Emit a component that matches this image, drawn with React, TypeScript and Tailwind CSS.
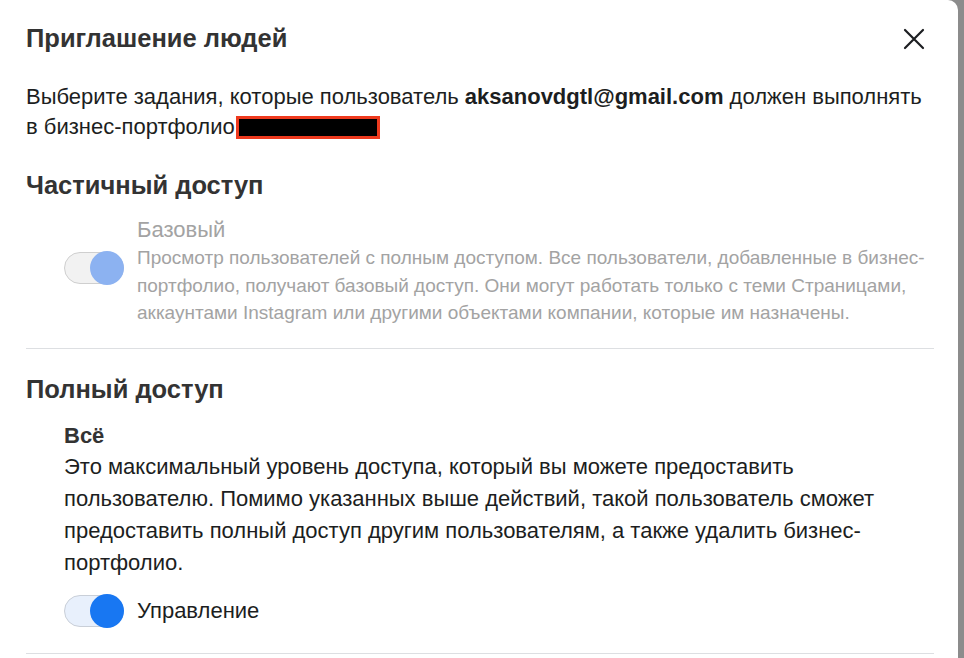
import React from "react";

function Toggle({ disabled }: { disabled?: boolean }) {
  return (
    <div
      className={
        "relative w-[60px] h-[32px] rounded-full border shrink-0 " +
        (disabled ? "bg-[#f2f2f2] border-[#cfcfcf]" : "bg-[#e8f0fc] border-[#c9cfd8]")
      }
    >
      <div
        className={
          "absolute top-[-2px] right-[-1px] w-[34px] h-[34px] rounded-full " +
          (disabled ? "bg-[#8cb2f1]" : "bg-[#1877f2]")
        }
      />
    </div>
  );
}

export default function App() {
  return (
    <div
      className="w-[964px] h-[658px] bg-[#8c8c8c] flex overflow-hidden"
      style={{ fontFamily: '"Liberation Sans", Arial, sans-serif' }}
    >
      <div className="w-[958px] h-full bg-white rounded-tr-[10px] pl-[26px] pr-[24px] pt-[23px] text-[#1c1e21]">
        <div className="flex items-center justify-between">
          <h1 className="text-[25.5px] leading-[30px] font-bold text-[#333333]">Приглашение людей</h1>
          <svg width="22" height="22" viewBox="0 0 22 22" className="mr-[9px] mt-[2px]">
            <path d="M2 2L20 20M20 2L2 20" stroke="#1c1e21" strokeWidth="2.2" strokeLinecap="round" />
          </svg>
        </div>

        <p className="mt-[29px] text-[22px] leading-[30px]">
          Выберите задания, которые пользователь <b>aksanovdgtl@gmail.com</b> должен выполнять
          <br />в бизнес-портфолио
          <span className="inline-block align-middle w-[144px] h-[23px] bg-black border-[3px] border-[#ee3a1e] ml-[1px] -mt-[2px]" />
        </p>

        <h2 className="mt-[28px] text-[25.5px] leading-[30px] font-bold text-[#333333]">Частичный доступ</h2>

        <div className="mt-[16px] flex">
          <div className="w-[111px] shrink-0 pl-[38px] pt-[36px]">
            <Toggle disabled />
          </div>
          <div className="text-[#a3a3a3]">
            <div className="text-[22px] leading-[28px]">Базовый</div>
            <div className="text-[19px] leading-[27.5px]">
              Просмотр пользователей с полным доступом. Все пользователи, добавленные в бизнес-
              <br />
              портфолио, получают базовый доступ. Они могут работать только с теми Страницами,
              <br />
              аккаунтами Instagram или другими объектами компании, которые им назначены.
            </div>
          </div>
        </div>

        <div className="mt-[21px] h-px bg-[#dddfe2]" />

        <h2 className="mt-[25px] text-[25.5px] leading-[30px] font-bold text-[#333333]">Полный доступ</h2>

        <div className="pl-[38px]">
          <div className="mt-[18px] text-[22px] leading-[28px] font-bold text-[#333333]">Всё</div>
          <div className="mt-[1px] text-[22px] leading-[32px] text-[#1c1e21]">
            Это максимальный уровень доступа, который вы можете предоставить
            <br />
            пользователю. Помимо указанных выше действий, такой пользователь сможет
            <br />
            предоставить полный доступ другим пользователям, а также удалить бизнес-
            <br />
            портфолио.
          </div>
          <div className="mt-[16px] flex items-center">
            <Toggle />
            <span className="ml-[13px] text-[22px] leading-[28px]">Управление</span>
          </div>
        </div>

        <div className="mt-[26px] h-px bg-[#dddfe2]" />
      </div>
    </div>
  );
}
